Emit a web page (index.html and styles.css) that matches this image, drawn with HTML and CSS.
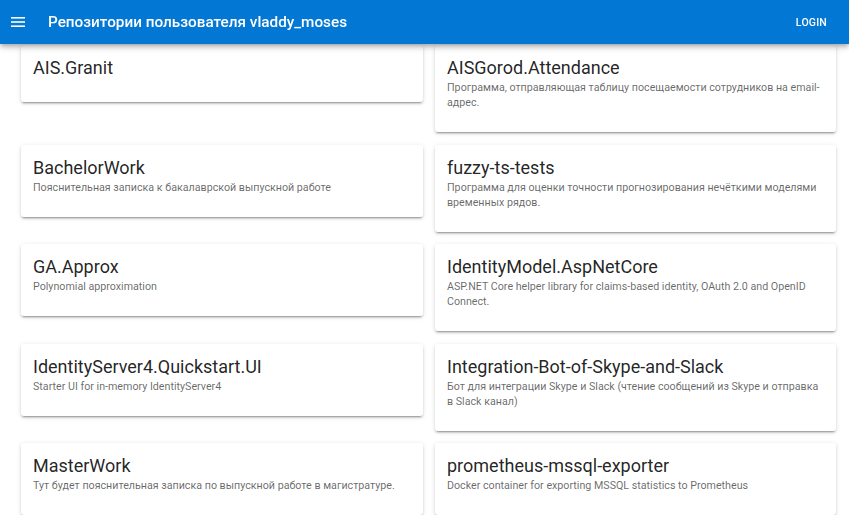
FILE: index.html
```html
<!DOCTYPE html>
<html lang="ru">
<head>
<meta charset="utf-8">
<title>Репозитории пользователя vladdy_moses</title>
<link rel="stylesheet" href="styles.css">
</head>
<body>
<header class="appbar">
  <button class="menu-btn" aria-label="menu">
    <svg width="14" height="10" viewBox="0 0 14 10"><rect x="0" y="0" width="14" height="1.6" fill="#fff"/><rect x="0" y="4.2" width="14" height="1.6" fill="#fff"/><rect x="0" y="8.4" width="14" height="1.6" fill="#fff"/></svg>
  </button>
  <div class="appbar-title">Репозитории пользователя vladdy_moses</div>
  <div class="spacer"></div>
  <button class="login">Login</button>
</header>
<main class="grid">
  <div class="card"><div class="card-title">AIS.Granit</div></div>
  <div class="card"><div class="card-title">AISGorod.Attendance</div><div class="card-desc">Программа, отправляющая таблицу посещаемости сотрудников на email-адрес.</div></div>
  <div class="card"><div class="card-title">BachelorWork</div><div class="card-desc">Пояснительная записка к бакалаврской выпускной работе</div></div>
  <div class="card"><div class="card-title">fuzzy-ts-tests</div><div class="card-desc">Программа для оценки точности прогнозирования нечёткими моделями временных рядов.</div></div>
  <div class="card"><div class="card-title">GA.Approx</div><div class="card-desc">Polynomial approximation</div></div>
  <div class="card"><div class="card-title">IdentityModel.AspNetCore</div><div class="card-desc">ASP.NET Core helper library for claims-based identity, OAuth 2.0 and OpenID Connect.</div></div>
  <div class="card"><div class="card-title">IdentityServer4.Quickstart.UI</div><div class="card-desc">Starter UI for in-memory IdentityServer4</div></div>
  <div class="card"><div class="card-title">Integration-Bot-of-Skype-and-Slack</div><div class="card-desc">Бот для интеграции Skype и Slack (чтение сообщений из Skype и отправка в Slack канал)</div></div>
  <div class="card"><div class="card-title">MasterWork</div><div class="card-desc">Тут будет пояснительная записка по выпускной работе в магистратуре.</div></div>
  <div class="card"><div class="card-title">prometheus-mssql-exporter</div><div class="card-desc">Docker container for exporting MSSQL statistics to Prometheus</div></div>
</main>
</body>
</html>
```
FILE: styles.css
```css
* { box-sizing: border-box; }
html, body { margin: 0; padding: 0; }
body {
  background: #fff;
  font-family: Roboto, "Noto Sans", sans-serif;
  color: rgba(0,0,0,0.87);
  overflow: hidden;
}
.appbar {
  position: fixed;
  top: 0; left: 0; right: 0;
  height: 44px;
  background: #0277d3;
  display: flex;
  align-items: center;
  padding: 0 22px 0 11px;
  z-index: 10;
  box-shadow: 0 2px 4px -1px rgba(0,0,0,.2), 0 4px 5px 0 rgba(0,0,0,.14), 0 1px 10px 0 rgba(0,0,0,.12);
}
.menu-btn {
  background: none; border: 0; padding: 0; margin: 0;
  width: 14px; height: 10px;
  display: flex;
}
.appbar-title {
  margin-left: 23px;
  color: #fff;
  font-size: 15.3px;
  font-weight: 500;
}
.spacer { flex: 1; }
.login {
  background: none; border: 0; padding: 0;
  color: #fff;
  font-family: Roboto, sans-serif;
  font-size: 10.5px;
  font-weight: 500;
  text-transform: uppercase;
  letter-spacing: 0.2px;
}
.grid {
  display: grid;
  grid-template-columns: 402px 401px;
  column-gap: 12px;
  row-gap: 12.5px;
  align-items: start;
  padding: 45px 13px 0 21px;
}
.card {
  background: #fff;
  border-radius: 3px;
  box-shadow: 0 3px 1px -2px rgba(0,0,0,.2), 0 2px 2px 0 rgba(0,0,0,.14), 0 1px 5px 0 rgba(0,0,0,.12);
  padding: 11px 12px 22px 12px;
}
.card-title {
  font-size: 18px;
  line-height: 24px;
}
.card-desc {
  font-size: 10.7px;
  line-height: 15px;
  color: rgba(0,0,0,0.6);
}
```
